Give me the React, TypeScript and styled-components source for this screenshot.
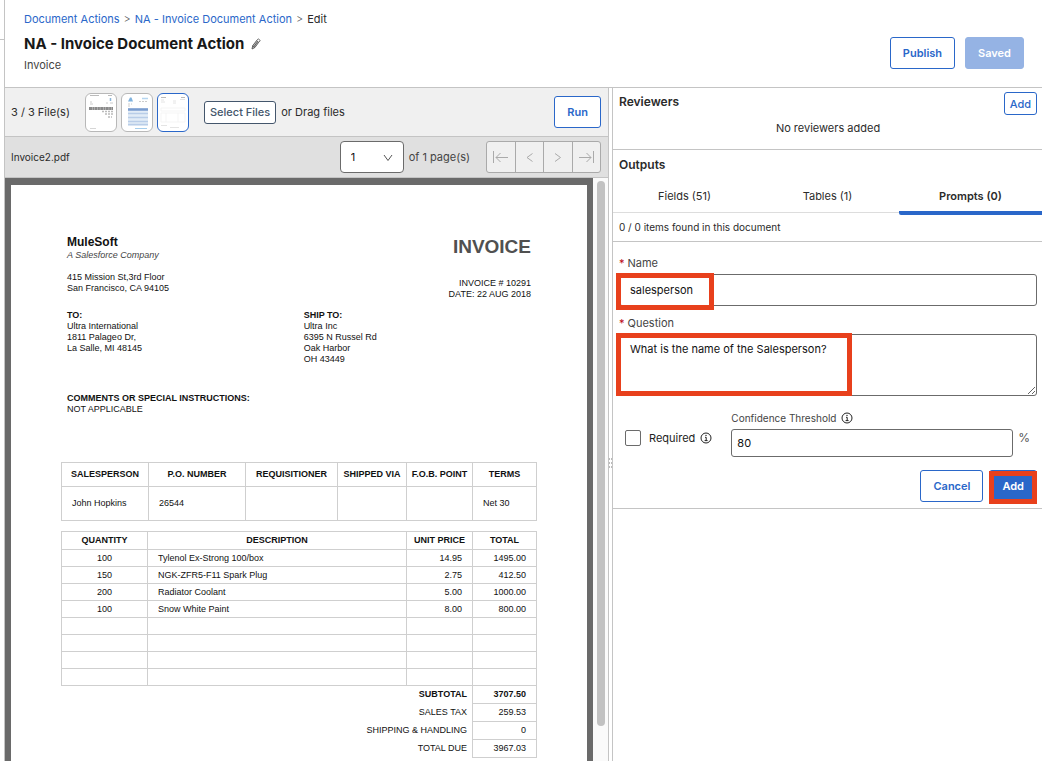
import React from 'react';
import styled, { createGlobalStyle, css } from 'styled-components';

const blue = '#2a67c9';
const line = '#c4c4c4';
const outline = '#6b6b6b';
const callout = '#e8401c';

const GlobalStyle = createGlobalStyle`
  *, *::before, *::after { box-sizing: border-box; }
  body { margin: 0; background: #fff; color: #2b2b2b; font: 11px/16px Inter, "Liberation Sans", sans-serif; }
  button, input, select, textarea { font: inherit; color: inherit; margin: 0; }
  h1, h2, p { margin: 0; }
`;

const Shell = styled.div`
  display: grid;
  grid-template-columns: 5px minmax(0, 1fr);
  height: 100vh;
  overflow: hidden;
`;

const Gutter = styled.div`
  border-right: 1px solid ${line};
  padding-top: 39px;
`;

const GutterRule = styled.div`
  border-top: 1px solid ${line};
`;

const Main = styled.main`
  display: flex;
  flex-direction: column;
  min-height: 0;
`;

const Header = styled.header`
  display: flex;
  justify-content: space-between;
  flex: none;
  height: 88px;
  padding: 11px 18px 0 19px;
  border-bottom: 1px solid ${line};
`;

const Breadcrumb = styled.nav`
  display: flex;
  gap: 4px;
  a { color: ${blue}; text-decoration: none; }
`;

const Separator = styled.span`
  color: #555;
  font-weight: 300;
`;

const TitleRow = styled.div`
  display: flex;
  align-items: center;
  gap: 7px;
  margin: 7px 0 3px;
`;

const Title = styled.h1`
  font-size: 15px;
  line-height: 20px;
  font-weight: 700;
  color: #181818;
`;

const Subtitle = styled.p`
  color: #444;
`;

const HeaderActions = styled.div`
  display: flex;
  gap: 10px;
  padding-top: 26px;
`;

const IconButton = styled.button`
  display: flex;
  padding: 0;
  border: 0;
  background: none;
  color: #555;
`;

const Button = styled.button<{ $variant?: 'primary' | 'muted' | 'neutral'; $small?: boolean }>`
  height: ${p => (p.$small ? 23 : 32)}px;
  padding: 0 ${p => (p.$small ? 5 : 12)}px;
  border: 1px solid ${blue};
  border-radius: 3px;
  background: #fff;
  color: ${blue};
  font-weight: 600;
  white-space: nowrap;
  ${p => p.$small && css`font-weight: 500;`}
  ${p => p.$variant === 'primary' && css`background: ${blue}; color: #fff;`}
  ${p => p.$variant === 'muted' && css`background: #95b3e4; border-color: #95b3e4; color: #fff;`}
  ${p => p.$variant === 'neutral' && css`border-color: #44566c; color: #44566c;`}
`;

const Workspace = styled.div`
  display: grid;
  grid-template-columns: minmax(0, 604fr) 3px minmax(0, 430fr);
  flex: 1;
  min-height: 0;
`;

const ViewerPane = styled.section`
  display: flex;
  flex-direction: column;
  min-height: 0;
  border-right: 1px solid ${line};
`;

const FileBar = styled.div`
  display: flex;
  align-items: center;
  flex: none;
  height: 49px;
  padding: 0 7px 0 6px;
  border-bottom: 1px solid ${line};
  background: #f0f0f0;
`;

const FileCount = styled.span`
  width: 74px;
`;

const Thumbs = styled.div`
  display: flex;
  gap: 4px;
  margin-right: 15px;
`;

const Thumb = styled.button<{ $active?: boolean }>`
  display: flex;
  width: 32px;
  height: 39px;
  padding: 0;
  overflow: hidden;
  border: 1px solid ${p => (p.$active ? blue : '#b8b8b8')};
  border-radius: 6px;
  background: #fff;
`;

const DragHint = styled.span`
  flex: 1;
  padding-left: 5px;
`;

const PageBar = styled.div`
  display: flex;
  align-items: center;
  flex: none;
  height: 41px;
  padding: 0 7px 0 6px;
  border-bottom: 1px solid ${line};
  background: #e0e0e0;
`;

const FileName = styled.span`
  flex: 1;
  font-size: 10px;
`;

const SelectWrap = styled.div`
  position: relative;
  svg { position: absolute; right: 11px; top: 13px; pointer-events: none; }
`;

const PageSelect = styled.select`
  appearance: none;
  width: 64px;
  height: 32px;
  padding: 0 10px;
  border: 1px solid ${outline};
  border-radius: 4px;
  background: #fff;
  color: #111;
`;

const PageTotal = styled.span`
  margin: 0 16px 0 5px;
  color: #444;
`;

const Pager = styled.div`
  display: flex;
  width: 115px;
  border: 1px solid #aaa;
  border-radius: 3px;
  background: #f0f0f0;
`;

const PagerButton = styled.button`
  display: flex;
  align-items: center;
  justify-content: center;
  flex: 1;
  height: 30px;
  padding: 0;
  border: 0;
  background: none;
  color: #aaa;
  & + & { border-left: 1px solid #aaa; }
`;

const DocumentArea = styled.div`
  display: flex;
  flex: 1;
  min-height: 0;
`;

const Backdrop = styled.div`
  flex: 1;
  overflow: hidden;
  padding: 7px 6px 0;
  background: #6a6a6a;
`;

const ScrollTrack = styled.div`
  flex: none;
  width: 15px;
  padding: 3px 2px 0 4px;
  background: #fafafa;
`;

const ScrollThumb = styled.div`
  width: 8px;
  height: 94%;
  border-radius: 4px;
  background: #c1c1c1;
`;

const Sheet = styled.article`
  min-height: 100%;
  padding: 50px 50px 24px;
  background: #fff;
  color: #111;
  font: 9px/11px "Liberation Sans", Arial, sans-serif;
`;

const SheetSection = styled.div<{ $top: number }>`
  display: grid;
  grid-template-columns: 51fr 49fr;
  margin-top: ${p => p.$top}px;
  padding: 0 6px;
`;

const SellerName = styled.div`
  font-size: 12px;
  line-height: 14px;
  font-weight: 700;
`;

const Tagline = styled.div`
  margin-bottom: 11px;
  line-height: 12px;
  font-style: italic;
  color: #444;
`;

const InvoiceMeta = styled.div`
  text-align: right;
`;

const InvoiceWord = styled.div`
  margin-bottom: 20px;
  font-size: 19px;
  line-height: 23px;
  font-weight: 700;
  color: #505050;
`;

const InvoiceTable = styled.table<{ $top: number }>`
  width: 100%;
  margin-top: ${p => p.$top}px;
  border-collapse: collapse;
  table-layout: fixed;
  th, td { padding: 0 10px; border: 1px solid #cfcfcf; }
  th { padding: 0; font-weight: 700; white-space: nowrap; }
`;

const Row = styled.tr<{ $height: number }>`
  height: ${p => p.$height}px;
`;

const Num = styled.td<{ $strong?: boolean }>`
  text-align: right;
  font-weight: ${p => (p.$strong ? 700 : 400)};
`;

const TotalLabel = styled.th<{ $strong?: boolean }>`
  && { border: 0; padding: 0 5px; text-align: right; font-weight: ${p => (p.$strong ? 700 : 400)}; }
`;

const Center = styled.td`
  text-align: center;
`;

const Splitter = styled.div`
  display: flex;
  align-items: center;
  justify-content: center;
  padding-top: 76px;
`;

const SidePane = styled.aside`
  border-left: 1px solid ${line};
`;

const Reviewers = styled.section`
  height: 62px;
  padding: 4px 5px 0 6px;
  border-bottom: 1px solid ${line};
`;

const PaneHead = styled.div`
  display: flex;
  justify-content: space-between;
  align-items: flex-start;
`;

const PaneTitle = styled.h2`
  font-size: 12px;
  line-height: 20px;
  font-weight: 600;
`;

const Empty = styled.p`
  margin-top: 5px;
  text-align: center;
`;

const OutputsTitle = styled(PaneTitle)`
  padding: 5px 6px;
`;

const Tabs = styled.div`
  display: flex;
  height: 33px;
  border-bottom: 1px solid #ddd;
`;

const Tab = styled.button<{ $active?: boolean }>`
  flex: 1;
  height: ${p => (p.$active ? 35 : 33)}px;
  padding: 0 0 ${p => (p.$active ? 0 : 2)}px;
  border: 0;
  border-bottom: ${p => (p.$active ? `4px solid ${blue}` : '0')};
  border-radius: 2px 0 0 2px;
  background: none;
  font-weight: ${p => (p.$active ? 600 : 400)};
`;

const FoundCount = styled.p`
  height: 29px;
  padding: 6px;
  border-bottom: 1px solid ${line};
  font-size: 10px;
`;

const Form = styled.form`
  padding: 13px 5px 6px 6px;
  border-bottom: 1px solid ${line};
`;

const FieldLabel = styled.label<{ $required?: boolean }>`
  display: block;
  height: 19px;
  color: #444;
  ${p => p.$required && css`&::before { content: '*'; margin-right: 3px; color: #ba0517; }`}
`;

const Field = styled.div`
  position: relative;
  margin-bottom: 9px;
`;

const fieldBox = css`
  display: block;
  width: 100%;
  border: 1px solid ${outline};
  border-radius: 3px;
  background: #fff;
  color: #111;
`;

const TextInput = styled.input<{ $compact?: boolean }>`
  ${fieldBox}
  height: ${p => (p.$compact ? 28 : 32)}px;
  padding: 0 ${p => (p.$compact ? 5 : 10)}px;
`;

const TextArea = styled.textarea`
  ${fieldBox}
  height: 62px;
  padding: 6px 10px;
  resize: vertical;
`;

const Highlight = styled.span<{ $w: number; $h: number; $left: number; $top: number }>`
  position: absolute;
  left: ${p => p.$left}px;
  top: ${p => p.$top}px;
  width: ${p => p.$w}px;
  height: ${p => p.$h}px;
  border: 5px solid ${callout};
  pointer-events: none;
`;

const Options = styled.div`
  display: flex;
  align-items: center;
  margin: 15px 7px 13px 6px;
`;

const RequiredGroup = styled.div`
  display: flex;
  align-items: center;
  gap: 5px;
  padding-top: 8px;
`;

const CheckLabel = styled.label`
  display: flex;
  align-items: center;
  gap: 8px;
  color: #222;
`;

const Checkbox = styled.input`
  appearance: none;
  width: 16px;
  height: 16px;
  border: 1px solid ${outline};
  border-radius: 2px;
  background: #fff;
`;

const Threshold = styled.div`
  flex: 1;
  margin: 0 5px 0 19px;
`;

const ThresholdLabel = styled.label`
  display: flex;
  align-items: center;
  gap: 5px;
  height: 18px;
  padding-bottom: 4px;
  font-size: 10px;
  color: #444;
`;

const Percent = styled.span`
  padding-top: 8px;
  font-size: 12px;
  color: #555;
`;

const FormActions = styled.div`
  display: flex;
  justify-content: flex-end;
  gap: 6px;
`;

const ActionSlot = styled.div`
  position: relative;
`;

const InfoIcon = () => (
  <svg width="12" height="12" viewBox="0 0 12 12" fill="none" stroke="#222" aria-hidden="true">
    <circle cx="6" cy="6" r="5" />
    <path d="M5 5.3h1.2v3.2M4.6 8.6h3" />
    <circle cx="6" cy="3.4" r=".7" fill="#222" stroke="none" />
  </svg>
);

const PencilIcon = () => (
  <svg width="10" height="12" viewBox="0 0 10 12" fill="none" stroke="currentColor" strokeWidth=".9" aria-hidden="true">
    <path d="M1 11l.7-3.300L5.600 2.600l2.100 1.700-3.800 5.200z" fill="#bbb" />
    <path d="M5.600 2.600l1-1.200c.4-.5.9-.5 1.300-.2l.8.7c.5.4.4.9.1 1.300l-1.100 1.100M2.700 8.900l3.900-5.200M1.700 7.700l2.200 1.800" />
  </svg>
);

const ChevronDown = () => (
  <svg width="10" height="8" viewBox="0 0 10 8" fill="none" stroke="#555" aria-hidden="true">
    <path d="M1 1l4 5.500L9 1" />
  </svg>
);

const pagerPaths: Record<string, string> = {
  'First page': 'M1.500 1v12M16 7.500H4M8.500 3L4 7.500l4.500 4.500',
  'Previous page': 'M11.500 3.500L6 7.500l5.500 4',
  'Next page': 'M6 3.500l5.500 4-5.500 4',
  'Last page': 'M15.500 1v12M1 7.500h12M8.500 3L13 7.500l-4.500 4.500',
};

const PagerIcon = ({ name }: { name: string }) => (
  <svg width="17" height="14" viewBox="0 0 17 14" fill="none" stroke="currentColor" aria-hidden="true">
    <path d={pagerPaths[name]} />
  </svg>
);

const ThumbReceipt = () => (
  <svg width="30" height="37" viewBox="0 0 30 37" aria-hidden="true">
    <path d="M4 1.500h9M22 1.500h4" stroke="#aaa" strokeWidth=".8" />
    <path d="M24.500 4v3" stroke="#8ab4d8" strokeWidth="1.500" />
    <path d="M4 8h2M4 10h3M20 9h2M24 9h3" stroke="#ccc" />
    <path d="M3 14.500h24" stroke="#8a8a8a" strokeWidth="3" strokeDasharray="3 .3 2 .3" />
    <path d="M16 17.500h11M19 20h8M22 23h4" stroke="#bbb" strokeWidth="1.500" strokeDasharray="2 1" />
    <path d="M4 34.500h6" stroke="#ccc" strokeWidth=".8" />
  </svg>
);

const ThumbStatement = () => (
  <svg width="30" height="37" viewBox="0 0 30 37" aria-hidden="true">
    <path d="M6 7.500l2-4h1.500l1.500 4z" fill="#7fb2de" />
    <path d="M20 4.500h6" stroke="#b5d5f0" strokeWidth="1.500" />
    <path d="M17 7.500h8M6 10h4M6 12h3" stroke="#ccc" strokeDasharray="2 1" />
    <rect x="6" y="14" width="20" height="18" fill="#e3ecf7" />
    <path d="M6 15.500h20" stroke="#7a9dcf" strokeWidth="2.500" />
    <path d="M6 19.500h20M6 23.500h20M6 27.500h20M6 30.500h20" stroke="#b9cde8" strokeWidth="1.500" />
    <path d="M13 34.500h12" stroke="#a5cdec" />
  </svg>
);

const ThumbInvoice = () => (
  <svg width="30" height="37" viewBox="0 0 30 37" fill="none" stroke="#ddd" aria-hidden="true">
    <path d="M3 3.500h5M23 3.500h4" stroke="#bbb" strokeWidth="1.200" />
    <path d="M3 6h3M3 8h4M15 7h3M15 9h3M22 5.500h5" strokeWidth=".8" />
    <path d="M3 14h24v3H3zM3 19h24v9H3zM8 19v9M20 19v9" stroke="#f0f0f0" strokeWidth=".7" />
    <path d="M3 31.500h6M12 33.500h9" strokeWidth=".8" />
  </svg>
);

const items = [
  ['100', 'Tylenol Ex-Strong 100/box', '14.95', '1495.00'],
  ['150', 'NGK-ZFR5-F11 Spark Plug', '2.75', '412.50'],
  ['200', 'Radiator Coolant', '5.00', '1000.00'],
  ['100', 'Snow White Paint', '8.00', '800.00'],
  ['', '', '', ''],
  ['', '', '', ''],
  ['', '', '', ''],
  ['', '', '', ''],
];

const totals = [
  ['SUBTOTAL', '3707.50'],
  ['SALES TAX', '259.53'],
  ['SHIPPING & HANDLING', '0'],
  ['TOTAL DUE', '3967.03'],
];

const orderColumns = ['SALESPERSON', 'P.O. NUMBER', 'REQUISITIONER', 'SHIPPED VIA', 'F.O.B. POINT', 'TERMS'];
const orderValues = ['John Hopkins', '26544', '', '', '', 'Net 30'];

const Col = styled.col<{ $share: number }>`
  width: ${p => (p.$share / 475) * 100}%;
`;

const Invoice = () => (
  <Sheet>
    <SheetSection $top={0}>
      <div>
        <SellerName>MuleSoft</SellerName>
        <Tagline>A Salesforce Company</Tagline>
        <div>415 Mission St,3rd Floor</div>
        <div>San Francisco, CA 94105</div>
      </div>
      <InvoiceMeta>
        <InvoiceWord>INVOICE</InvoiceWord>
        <div>INVOICE # 10291</div>
        <div>DATE: 22 AUG 2018</div>
      </InvoiceMeta>
    </SheetSection>
    <SheetSection $top={10}>
      <div>
        <strong>TO:</strong>
        <div>Ultra International</div>
        <div>1811 Palageo Dr,</div>
        <div>La Salle, MI 48145</div>
      </div>
      <div>
        <strong>SHIP TO:</strong>
        <div>Ultra Inc</div>
        <div>6395 N Russel Rd</div>
        <div>Oak Harbor</div>
        <div>OH 43449</div>
      </div>
    </SheetSection>
    <SheetSection $top={28}>
      <div>
        <strong>COMMENTS OR SPECIAL INSTRUCTIONS:</strong>
        <div>NOT APPLICABLE</div>
      </div>
    </SheetSection>
    <InvoiceTable $top={47}>
      <colgroup>
        {[87, 97, 92, 69, 66, 64].map((w, i) => <Col key={i} $share={w} />)}
      </colgroup>
      <thead>
        <Row $height={24}>{orderColumns.map(c => <th key={c}>{c}</th>)}</Row>
      </thead>
      <tbody>
        <Row $height={34}>{orderValues.map((v, i) => <td key={i}>{v}</td>)}</Row>
      </tbody>
    </InvoiceTable>
    <InvoiceTable $top={10}>
      <colgroup>
        {[86, 259, 66, 64].map((w, i) => <Col key={i} $share={w} />)}
      </colgroup>
      <thead>
        <Row $height={18}><th>QUANTITY</th><th>DESCRIPTION</th><th>UNIT PRICE</th><th>TOTAL</th></Row>
      </thead>
      <tbody>
        {items.map(([qty, name, price, total], i) => (
          <Row $height={17} key={i}><Center>{qty}</Center><td>{name}</td><Num>{price}</Num><Num>{total}</Num></Row>
        ))}
      </tbody>
      <tfoot>
        {totals.map(([label, value], i) => (
          <Row $height={18} key={label}>
            <TotalLabel scope="row" colSpan={3} $strong={i === 0}>{label}</TotalLabel>
            <Num $strong={i === 0}>{value}</Num>
          </Row>
        ))}
      </tfoot>
    </InvoiceTable>
  </Sheet>
);

const PromptForm = () => (
  <Form onSubmit={e => e.preventDefault()}>
    <Field>
      <FieldLabel htmlFor="prompt-name" $required>Name</FieldLabel>
      <TextInput id="prompt-name" defaultValue="salesperson" />
      <Highlight $left={-3} $top={18} $w={98} $h={37} />
    </Field>
    <Field>
      <FieldLabel htmlFor="prompt-question" $required>Question</FieldLabel>
      <TextArea id="prompt-question" defaultValue="What is the name of the Salesperson?" />
      <Highlight $left={-3} $top={18} $w={236} $h={63} />
    </Field>
    <Options>
      <RequiredGroup>
        <CheckLabel><Checkbox type="checkbox" />Required</CheckLabel>
        <InfoIcon />
      </RequiredGroup>
      <Threshold>
        <ThresholdLabel htmlFor="threshold">Confidence Threshold <InfoIcon /></ThresholdLabel>
        <TextInput id="threshold" $compact defaultValue="80" />
      </Threshold>
      <Percent>%</Percent>
    </Options>
    <FormActions>
      <Button type="button">Cancel</Button>
      <ActionSlot>
        <Button type="submit" $variant="primary">Add</Button>
        <Highlight $left={0} $top={1} $w={48} $h={33} />
      </ActionSlot>
    </FormActions>
  </Form>
);

export default function App() {
  return (
    <>
      <GlobalStyle />
      <Shell>
        <Gutter><GutterRule /></Gutter>
        <Main>
          <Header>
            <div>
              <Breadcrumb aria-label="Breadcrumb">
                <a href="#actions">Document Actions</a>
                <Separator>&gt;</Separator>
                <a href="#invoice">NA - Invoice Document Action</a>
                <Separator>&gt;</Separator>
                <span>Edit</span>
              </Breadcrumb>
              <TitleRow>
                <Title>NA - Invoice Document Action</Title>
                <IconButton aria-label="Rename"><PencilIcon /></IconButton>
              </TitleRow>
              <Subtitle>Invoice</Subtitle>
            </div>
            <HeaderActions>
              <Button>Publish</Button>
              <Button $variant="muted">Saved</Button>
            </HeaderActions>
          </Header>
          <Workspace>
            <ViewerPane>
              <FileBar>
                <FileCount>3 / 3 File(s)</FileCount>
                <Thumbs>
                  <Thumb aria-label="File 1"><ThumbReceipt /></Thumb>
                  <Thumb aria-label="File 2"><ThumbStatement /></Thumb>
                  <Thumb aria-label="File 3" $active><ThumbInvoice /></Thumb>
                </Thumbs>
                <Button $small $variant="neutral">Select Files</Button>
                <DragHint>or Drag files</DragHint>
                <Button>Run</Button>
              </FileBar>
              <PageBar>
                <FileName>Invoice2.pdf</FileName>
                <SelectWrap>
                  <PageSelect aria-label="Page" defaultValue="1"><option>1</option></PageSelect>
                  <ChevronDown />
                </SelectWrap>
                <PageTotal>of 1 page(s)</PageTotal>
                <Pager>
                  {Object.keys(pagerPaths).map(name => (
                    <PagerButton key={name} aria-label={name}><PagerIcon name={name} /></PagerButton>
                  ))}
                </Pager>
              </PageBar>
              <DocumentArea>
                <Backdrop><Invoice /></Backdrop>
                <ScrollTrack><ScrollThumb /></ScrollTrack>
              </DocumentArea>
            </ViewerPane>
            <Splitter>
              <svg width="3" height="12" viewBox="0 0 3 12" fill="#bbb" aria-hidden="true">
                <path d="M0 1h1v2H0zM2 1h1v2H2zM0 5h1v2H0zM2 5h1v2H2zM0 9h1v2H0zM2 9h1v2H2z" />
              </svg>
            </Splitter>
            <SidePane>
              <Reviewers>
                <PaneHead>
                  <PaneTitle>Reviewers</PaneTitle>
                  <Button $small>Add</Button>
                </PaneHead>
                <Empty>No reviewers added</Empty>
              </Reviewers>
              <OutputsTitle>Outputs</OutputsTitle>
              <Tabs role="tablist">
                <Tab role="tab" aria-selected={false}>Fields (51)</Tab>
                <Tab role="tab" aria-selected={false}>Tables (1)</Tab>
                <Tab role="tab" aria-selected $active>Prompts (0)</Tab>
              </Tabs>
              <FoundCount>0 / 0 items found in this document</FoundCount>
              <PromptForm />
            </SidePane>
          </Workspace>
        </Main>
      </Shell>
    </>
  );
}
